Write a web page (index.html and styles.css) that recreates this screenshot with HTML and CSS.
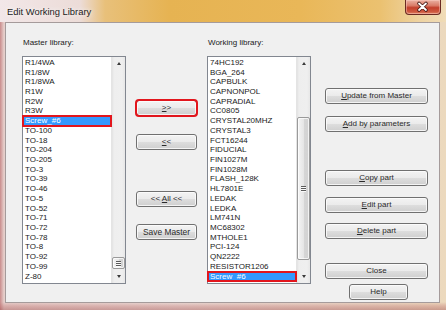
FILE: index.html
```html
<!DOCTYPE html>
<html>
<head>
<meta charset="utf-8">
<title>Edit Working Library</title>
<link rel="stylesheet" href="styles.css">
</head>
<body>
<div class="window">
  <div class="titlebar">
    <span class="title">Edit Working Library</span>
    <div class="close">
      <svg width="34" height="14" viewBox="0 0 34 14">
        <path d="M13 3.5 L20 10 M20 3.5 L13 10" stroke="#4a1c18" stroke-width="3.6" stroke-linecap="round" fill="none"/>
        <path d="M13 3.5 L20 10 M20 3.5 L13 10" stroke="#ffffff" stroke-width="1.8" stroke-linecap="round" fill="none"/>
      </svg>
    </div>
  </div>
  <div class="client">
    <div class="col col-list">
      <div class="label">Master library:</div>
      <div class="listbox">
        <ul class="items">
          <li>R1/4WA</li><li>R1/8W</li><li>R1/8WA</li><li>R1W</li><li>R2W</li><li>R3W</li>
          <li class="selected">Screw_#6</li>
          <li>TO-100</li><li>TO-18</li><li>TO-204</li><li>TO-205</li><li>TO-3</li><li>TO-39</li>
          <li>TO-46</li><li>TO-5</li><li>TO-52</li><li>TO-71</li><li>TO-72</li><li>TO-78</li>
          <li>TO-8</li><li>TO-92</li><li>TO-99</li><li>Z-80</li>
        </ul>
        <div class="scrollbar">
          <div class="sb-btn"><span class="arrow-up"></span></div>
          <div class="track">
            <div class="thumb thumb-master"><span class="grip"></span></div>
          </div>
          <div class="sb-btn"><span class="arrow-down"></span></div>
        </div>
      </div>
    </div>

    <div class="col col-mid">
      <div class="btn btn-first marked"><u>&gt;</u>&gt;</div>
      <div class="btn btn-back"><u>&lt;</u>&lt;</div>
      <div class="btn btn-all">&lt;&lt; <u>A</u>ll &lt;&lt;</div>
      <div class="btn btn-save">Save Master</div>
    </div>

    <div class="col col-list col-work">
      <div class="label">Working library:</div>
      <div class="listbox">
        <ul class="items">
          <li>74HC192</li><li>BGA_264</li><li>CAPBULK</li><li>CAPNONPOL</li><li>CAPRADIAL</li>
          <li>CC0805</li><li>CRYSTAL20MHZ</li><li>CRYSTAL3</li><li>FCT16244</li><li>FIDUCIAL</li>
          <li>FIN1027M</li><li>FIN1028M</li><li>FLASH_128K</li><li>HL7801E</li><li>LEDAK</li>
          <li>LEDKA</li><li>LM741N</li><li>MC68302</li><li>MTHOLE1</li><li>PCI-124</li>
          <li>QN2222</li><li>RESISTOR1206</li>
          <li class="selected">Screw_#6</li>
        </ul>
        <div class="scrollbar">
          <div class="sb-btn"><span class="arrow-up"></span></div>
          <div class="track">
            <div class="thumb thumb-work"><span class="grip"></span></div>
          </div>
          <div class="sb-btn"><span class="arrow-down"></span></div>
        </div>
      </div>
    </div>

    <div class="col col-right">
      <div class="btn btn-update"><u>U</u>pdate from Master</div>
      <div class="btn btn-add"><u>A</u>dd by parameters</div>
      <div class="btn btn-copy"><u>C</u>opy part</div>
      <div class="btn btn-edit"><u>E</u>dit part</div>
      <div class="btn btn-delete"><u>D</u>elete part</div>
      <div class="btn btn-close">Close</div>
      <div class="btn btn-help">Help</div>
    </div>
  </div>
</div>
</body>
</html>
```
FILE: styles.css
```css
html, body {
  margin: 0;
  padding: 0;
}
body {
  width: 446px;
  height: 310px;
  overflow: hidden;
  font-family: "Liberation Sans", Arial, sans-serif;
  color: #1a1a1a;
}
.window {
  width: 446px;
  height: 310px;
  display: flex;
  flex-direction: column;
  box-sizing: border-box;
  background:
    linear-gradient(to bottom, rgba(0,0,0,0) 0px, rgba(0,0,0,0) 302px, rgba(190,110,110,0.35) 306px, rgba(160,80,80,0.45) 310px),
    linear-gradient(to right, #c98c8c 0px, #e6cfcb 4px, #eadbd6 40%, #ead8c6 80%, #ecd9bd 100%);
}
.titlebar {
  height: 22px;
  display: flex;
  align-items: flex-start;
  background: linear-gradient(to right, #f2e7e8 0px, #ecdcd8 80px, #e8c07a 105px, #e6b352 170px, #e9b758 300px, #ebc170 380px, #eed3a2 420px, #f0dcb8 446px);
}
.title {
  margin-top: 6px;
  padding-left: 7px;
  font-size: 9.4px;
  line-height: 12px;
  color: #1b1b1b;
  text-shadow: 0 0 4px rgba(255,255,255,0.9), 0 0 8px rgba(255,255,255,0.7);
}
.close {
  margin-left: auto;
  margin-right: 5px;
  width: 36px;
  height: 15px;
  box-sizing: border-box;
  border: 1px solid #6a2a22;
  border-top: none;
  border-radius: 0 0 4px 4px;
  background: linear-gradient(to bottom, #eab1a3 0%, #d97b68 40%, #c33f2c 55%, #cf5a40 85%, #e08a6c 100%);
  box-shadow: inset 0 0 0 1px rgba(255,210,200,0.45);
}
.close svg {
  display: block;
}
.client {
  margin: 0 6px 0 5px;
  height: 281px;
  box-sizing: border-box;
  background: #f0f0f0;
  border: 1px solid rgba(90,70,70,0.5);
  display: flex;
  padding: 15px 0 0 16px;
}
.col {
  display: flex;
  flex-direction: column;
}
.col-list {
  width: 104px;
}
.col-work {
  margin-left: 10px;
}
.label {
  font-size: 8px;
  line-height: 10px;
  height: 10px;
  margin-bottom: 8px;
  margin-left: 1px;
  white-space: nowrap;
  color: #222;
}
.listbox {
  height: 228px;
  box-sizing: border-box;
  border: 1px solid #828790;
  background: #fff;
  display: flex;
}
.items {
  list-style: none;
  margin: 0;
  padding: 0.8px 0 0 0;
  flex: 1;
  min-width: 0;
}
.items li {
  font-size: 8px;
  line-height: 9.73px;
  height: 9.73px;
  padding-left: 2px;
  white-space: nowrap;
}
.items li.selected {
  background: #3399ff;
  color: #fff;
  outline: 2px solid #e2161d;
  outline-offset: -1px;
  position: relative;
  z-index: 1;
}
.scrollbar {
  width: 13px;
  display: flex;
  flex-direction: column;
  background: linear-gradient(to right, #e2e2e2 0px, #eeeeee 2px, #efefef 10px, #e7e7e7 13px);
  border-left: 1px solid #e4e4e4;
}
.sb-btn {
  height: 13px;
  display: flex;
  align-items: center;
  justify-content: center;
}
.arrow-up {
  width: 0;
  height: 0;
  border-left: 2.5px solid transparent;
  border-right: 2.5px solid transparent;
  border-bottom: 3px solid #3a3a3a;
}
.arrow-down {
  width: 0;
  height: 0;
  border-left: 2.5px solid transparent;
  border-right: 2.5px solid transparent;
  border-top: 3px solid #3a3a3a;
}
.track {
  flex: 1;
  display: flex;
  flex-direction: column;
}
.thumb {
  box-sizing: border-box;
  border: 1px solid #9a9a9a;
  border-radius: 2px;
  background: linear-gradient(to right, #f4f4f4 0%, #e6e6e6 50%, #d6d6d6 51%, #d2d2d2 100%);
  box-shadow: inset 0 0 0 1px rgba(255,255,255,0.7);
  display: flex;
  align-items: center;
  justify-content: center;
}
.thumb-master {
  margin-top: auto;
  margin-bottom: 1px;
  height: 12px;
}
.thumb-work {
  margin-top: 47px;
  height: 143px;
}
.grip {
  width: 5px;
  height: 1px;
  background: #5b5b5b;
  box-shadow: 0 2px 0 #5b5b5b, 0 -2px 0 #5b5b5b, 0 1px 0 #fafafa, 0 3px 0 #fafafa, 0 -1px 0 #fafafa;
}
.col-mid {
  width: 61px;
  margin-left: 10px;
}
.col-right {
  width: 103px;
  margin-left: 14px;
}
.btn {
  height: 16px;
  box-sizing: border-box;
  border: 1px solid #707070;
  border-radius: 3px;
  background: linear-gradient(to bottom, #f3f3f3 0%, #ebebeb 48%, #dddddd 52%, #cfcfcf 100%);
  box-shadow: inset 0 0 0 1px rgba(252,252,252,0.8);
  font-size: 8px;
  line-height: 14px;
  text-align: center;
  white-space: nowrap;
  color: #2a2a2a;
}
.btn u {
  text-decoration-thickness: 1px;
  text-underline-offset: 1px;
}
.marked {
  outline: 2px solid #e2161d;
  outline-offset: -1px;
}
.btn-first { margin-top: 62px; }
.btn-back { margin-top: 18px; }
.btn-all { margin-top: 41px; }
.btn-save { margin-top: 17px; font-size: 8.4px; }
.btn-update { margin-top: 50px; }
.btn-add { margin-top: 12px; }
.btn-copy { margin-top: 38px; }
.btn-edit { margin-top: 11px; }
.btn-delete { margin-top: 10px; }
.btn-close { margin-top: 24px; }
.btn-help {
  margin-top: 5px;
  margin-left: 24px;
  width: 59px;
}
```
